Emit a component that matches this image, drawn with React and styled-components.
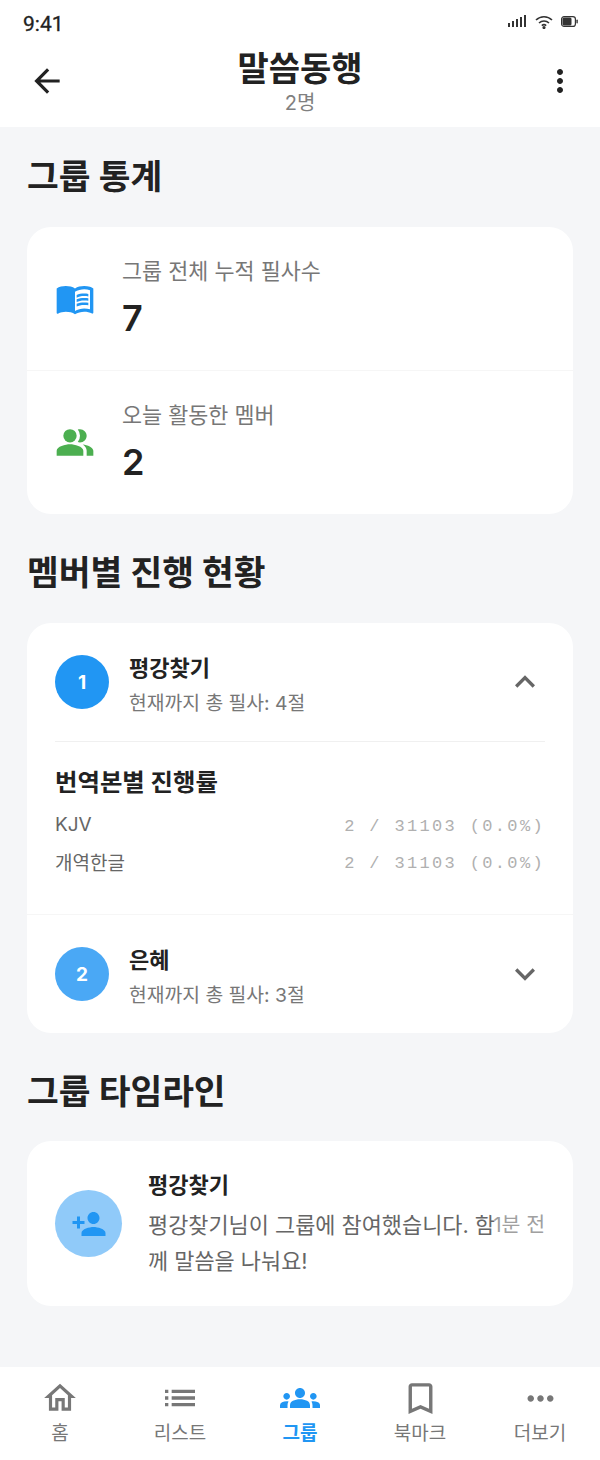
import styled, { createGlobalStyle } from "styled-components";
import {
  MdArrowBack, MdMoreVert, MdMenuBook, MdPeopleAlt, MdExpandLess, MdExpandMore,
  MdPersonAdd, MdOutlineHome, MdList, MdGroups, MdBookmarkBorder, MdMoreHoriz,
} from "react-icons/md";

const sans = `Inter, "Noto Sans CJK KR", sans-serif`;

const Global = createGlobalStyle`
  * { box-sizing: border-box; }
  html, body { margin: 0; background: #f5f6f8; }
  body { font-family: ${sans}; }
`;

const tabs = [
  { label: "홈", Icon: MdOutlineHome, size: 38 },
  { label: "리스트", Icon: MdList, size: 40 },
  { label: "그룹", Icon: MdGroups, size: 40, active: true },
  { label: "북마크", Icon: MdBookmarkBorder, size: 41 },
  { label: "더보기", Icon: MdMoreHoriz, size: 39 },
];

function SignalIcon() {
  return (
    <svg width="19" height="13" viewBox="0 0 19 13" fill="#333">
      <rect x="0" y="8" width="2" height="4" />
      <rect x="4" y="6" width="2" height="6" />
      <rect x="8" y="4" width="2" height="8" />
      <rect x="12" y="2" width="2" height="10" />
      <rect x="16" y="0" width="2" height="12" />
    </svg>
  );
}

function WifiIcon() {
  return (
    <svg width="18" height="14" viewBox="0 0 18 14" fill="none" stroke="#333" strokeWidth="1.6">
      <path d="M1 5 C5.5 0.6 12.5 0.6 17 5" />
      <path d="M4 8 C6.8 5.4 11.2 5.4 14 8" />
      <path d="M6.8 10.6 C8 9.6 10 9.6 11.2 10.6" />
      <circle cx="9" cy="12.6" r="0.8" fill="#333" />
    </svg>
  );
}

function BatteryIcon() {
  return (
    <svg width="17" height="11" viewBox="0 0 17 11">
      <rect x="0.6" y="0.6" width="13.8" height="9.8" rx="2.5" fill="none" stroke="#333" strokeWidth="1.2" />
      <rect x="1.5" y="1.5" width="9" height="8" rx="1.5" fill="#333" />
      <rect x="15.4" y="3.5" width="1.4" height="4" rx="0.7" fill="#333" />
    </svg>
  );
}

export default function App() {
  return (
    <Page>
      <Global />
      <TopArea>
        <StatusBar>
          <Clock>9:41</Clock>
          <StatusIcons><SignalIcon /><WifiIcon /><BatteryIcon /></StatusIcons>
        </StatusBar>
        <Header>
          <BackButton><MdArrowBack size={38} color="#222" /></BackButton>
          <HeaderTitle>
            <GroupName>말씀동행</GroupName>
            <GroupCount>2명</GroupCount>
          </HeaderTitle>
          <MenuButton><MdMoreVert size={36} color="#222" /></MenuButton>
        </Header>
      </TopArea>

      <Content>
        <SectionTitle>그룹 통계</SectionTitle>
        <Card>
          <StatRow>
            <StatIcon><MdMenuBook size={41} color="#2196f3" /></StatIcon>
            <div>
              <StatLabel>그룹 전체 누적 필사수</StatLabel>
              <StatValue>7</StatValue>
            </div>
          </StatRow>
          <Divider />
          <StatRow>
            <StatIcon><MdPeopleAlt size={41} color="#4caf50" /></StatIcon>
            <div>
              <StatLabel>오늘 활동한 멤버</StatLabel>
              <StatValue>2</StatValue>
            </div>
          </StatRow>
        </Card>

        <SectionTitle>멤버별 진행 현황</SectionTitle>
        <Card>
          <MemberRow>
            <Rank $color="#2196f3">1</Rank>
            <MemberInfo>
              <MemberName>평강찾기</MemberName>
              <MemberTotal>현재까지 총 필사: 4절</MemberTotal>
            </MemberInfo>
            <MdExpandLess size={40} color="#666" />
          </MemberRow>
          <Expanded>
            <ExpandedTitle>번역본별 진행률</ExpandedTitle>
            <ProgressRow>
              <ProgressName>KJV</ProgressName>
              <ProgressValue>2 / 31103 (0.0%)</ProgressValue>
            </ProgressRow>
            <ProgressRow>
              <ProgressName>개역한글</ProgressName>
              <ProgressValue>2 / 31103 (0.0%)</ProgressValue>
            </ProgressRow>
          </Expanded>
          <Divider />
          <MemberRow>
            <Rank $color="#4aa8f5">2</Rank>
            <MemberInfo>
              <MemberName>은혜</MemberName>
              <MemberTotal>현재까지 총 필사: 3절</MemberTotal>
            </MemberInfo>
            <MdExpandMore size={40} color="#666" />
          </MemberRow>
        </Card>

        <SectionTitle>그룹 타임라인</SectionTitle>
        <TimelineCard>
          <TimelineAvatar><MdPersonAdd size={36} color="#2196f3" /></TimelineAvatar>
          <TimelineBody>
            <TimelineName>평강찾기</TimelineName>
            <TimelineText>평강찾기님이 그룹에 참여했습니다. 함께 말씀을 나눠요!</TimelineText>
            <TimelineTime>1분 전</TimelineTime>
          </TimelineBody>
        </TimelineCard>
      </Content>

      <TabBar>
        {tabs.map(({ label, Icon, size, active }) => (
          <Tab key={label} $active={active}>
            <TabIcon><Icon size={size} /></TabIcon>
            <span>{label}</span>
          </Tab>
        ))}
      </TabBar>
    </Page>
  );
}

const Page = styled.div`
  width: 600px;
  height: 1460px;
  display: flex;
  flex-direction: column;
  background: #f5f6f8;
  overflow: hidden;
`;

const TopArea = styled.div`
  height: 127px;
  background: #fff;
`;

const StatusBar = styled.div`
  height: 44px;
  padding: 3px 22px 0 23px;
  display: flex;
  justify-content: space-between;
  align-items: center;
`;

const Clock = styled.div`
  font-family: Roboto, sans-serif;
  font-size: 21px;
  font-weight: 400;
  -webkit-text-stroke: 0.3px #222;
  color: #222;
`;

const StatusIcons = styled.div`
  display: flex;
  align-items: center;
  gap: 8px;
  margin-bottom: 4px;
`;

const Header = styled.div`
  height: 83px;
  padding: 0 22px 10px;
  display: grid;
  grid-template-columns: 1fr auto 1fr;
  align-items: center;
`;

const BackButton = styled.div`
  display: flex;
  padding-left: 6px;
`;

const MenuButton = styled.div`
  display: flex;
  justify-content: flex-end;
`;

const HeaderTitle = styled.div`
  display: flex;
  flex-direction: column;
  align-items: center;
`;

const GroupName = styled.div`
  font-size: 34px;
  line-height: 46px;
  font-weight: 700;
  color: #222;
`;

const GroupCount = styled.div`
  font-size: 20px;
  line-height: 24px;
  margin-top: -1px;
  color: #808080;
`;

const Content = styled.div`
  flex: 1;
  padding: 0 27px;
  display: flex;
  flex-direction: column;
`;

const SectionTitle = styled.h2`
  margin: 35px 0 26px;
  font-size: 34.5px;
  line-height: 48px;
  font-weight: 700;
  color: #222;

  &:first-child { margin-top: 26px; }
`;

const Card = styled.div`
  background: #fff;
  border-radius: 24px;
`;

const Divider = styled.div`
  height: 1px;
  background: #f6f6f6;
`;

const StatRow = styled.div`
  height: 143px;
  padding: 0 28px;
  display: flex;
  align-items: center;
  gap: 27px;
`;

const StatIcon = styled.div`
  width: 40px;
  display: flex;
  justify-content: center;
`;

const StatLabel = styled.div`
  font-size: 21.8px;
  line-height: 30px;
  color: #777;
`;

const StatValue = styled.div`
  margin-top: 9px;
  font-size: 36px;
  line-height: 46px;
  font-weight: 600;
  color: #222;
`;

const MemberRow = styled.div`
  height: 118px;
  padding: 0 28px;
  display: flex;
  align-items: center;
`;

const Rank = styled.div`
  width: 54px;
  height: 54px;
  border-radius: 50%;
  background: ${props => props.$color};
  color: #fff;
  font-size: 19px;
  font-weight: 700;
  display: flex;
  align-items: center;
  justify-content: center;
`;

const MemberInfo = styled.div`
  flex: 1;
  margin-left: 20px;
  padding-top: 5px;
`;

const MemberName = styled.div`
  font-size: 22px;
  line-height: 30px;
  font-weight: 700;
  color: #222;
`;

const MemberTotal = styled.div`
  margin-top: 6px;
  font-size: 19.3px;
  line-height: 28px;
  color: #777;
`;

const Expanded = styled.div`
  margin: 0 28px;
  padding: 20px 0 32px;
  border-top: 1px solid #f0f0f0;
`;

const ExpandedTitle = styled.div`
  font-size: 24.4px;
  line-height: 40px;
  font-weight: 700;
  color: #222;
  margin-bottom: 6px;
`;

const ProgressRow = styled.div`
  height: 37px;
  display: flex;
  justify-content: space-between;
  align-items: center;
`;

const ProgressName = styled.span`
  font-size: 19px;
  color: #666;
  margin-bottom: 5px;
`;

const ProgressValue = styled.span`
  font-family: "Liberation Mono", monospace;
  font-size: 17px;
  letter-spacing: 2.35px;
  color: #b0b0b0;
`;

const TimelineCard = styled(Card)`
  height: 165px;
  margin-top: -1px;
  padding: 0 28px;
  display: flex;
  align-items: center;
  gap: 26px;
`;

const TimelineAvatar = styled.div`
  width: 67px;
  height: 67px;
  flex: none;
  border-radius: 50%;
  background: #90caf9;
  display: flex;
  align-items: center;
  justify-content: center;
`;

const TimelineBody = styled.div`
  position: relative;
  flex: 1;
  padding: 1px 46px 0 0;
`;

const TimelineName = styled.div`
  font-size: 22px;
  line-height: 30px;
  font-weight: 700;
  color: #222;
`;

const TimelineText = styled.div`
  margin-top: 7px;
  font-size: 21.9px;
  line-height: 36px;
  color: #666;
  word-break: break-all;
`;

const TimelineTime = styled.div`
  position: absolute;
  right: 0;
  top: 41px;
  font-size: 20.5px;
  line-height: 30px;
  color: #a0a0a0;
`;

const TabBar = styled.div`
  height: 93px;
  background: #fff;
  display: flex;
  padding-top: 9px;
`;

const Tab = styled.div`
  flex: 1;
  display: flex;
  flex-direction: column;
  align-items: center;
  font-size: 19px;
  line-height: 26px;
  font-weight: ${props => (props.$active ? 700 : 400)};
  color: ${props => (props.$active ? "#2196f3" : "#777")};
`;

const TabIcon = styled.div`
  height: 44px;
  margin-bottom: 1px;
  display: flex;
  align-items: center;
  justify-content: center;
`;
